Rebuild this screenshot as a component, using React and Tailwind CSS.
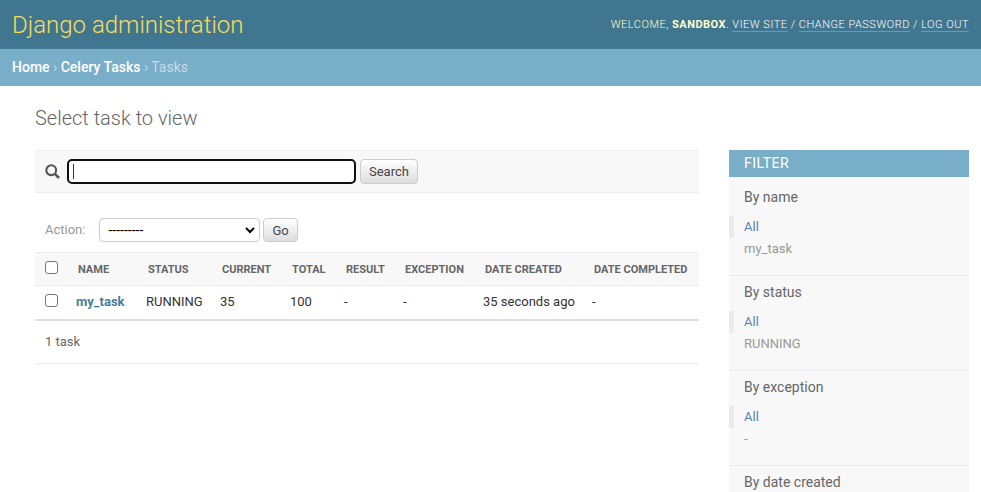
const columns = [
  { label: 'Name', width: 'w-[70px]' },
  { label: 'Status', width: 'w-[74px]' },
  { label: 'Current', width: 'w-[70px]' },
  { label: 'Total', width: 'w-[54px]' },
  { label: 'Result', width: 'w-[59px]' },
  { label: 'Exception', width: 'w-[80px]' },
  { label: 'Date created', width: 'w-[109px]' },
  { label: 'Date completed', width: 'w-auto' },
];

const rows = [['my_task', 'RUNNING', '35', '100', '-', '-', '35 seconds ago', '-']];

const filters = [
  { title: 'By name', options: ['All', 'my_task'] },
  { title: 'By status', options: ['All', 'RUNNING'] },
  { title: 'By exception', options: ['All', '-'] },
  { title: 'By date created', options: [] },
];

const buttonStyle =
  'rounded border border-[#ccc] bg-linear-to-b from-white to-[#ddd] px-2 text-[13px] leading-none text-[#444]';

function ToolLink({ children }) {
  return (
    <a href="#" className="border-b border-white/25 text-white">
      {children}
    </a>
  );
}

function Header() {
  return (
    <header className="flex h-[49px] items-center justify-between bg-[#417690] px-3 text-[#ffc]">
      <div className="text-2xl font-light text-[#f5dd5d]">
        <a href="#">Django administration</a>
      </div>
      <div className="pt-px text-[11px] font-light tracking-[0.5px] uppercase">
        Welcome, <strong className="font-bold">sandbox</strong>. <ToolLink>View site</ToolLink> /{' '}
        <ToolLink>Change password</ToolLink> / <ToolLink>Log out</ToolLink>
      </div>
    </header>
  );
}

function Breadcrumbs() {
  return (
    <nav aria-label="Breadcrumbs" className="h-[37px] bg-[#79aec8] px-3 text-sm leading-9 text-[#c4dce8]">
      <a href="#" className="font-medium text-white">Home</a>
      {' › '}
      <a href="#" className="font-medium text-white">Celery Tasks</a>
      {' › Tasks'}
    </nav>
  );
}

function SearchBar() {
  return (
    <form className="flex h-[43px] items-center border-y border-[#eee] bg-[#f8f8f8] px-[10px]" onSubmit={(e) => e.preventDefault()}>
      <label htmlFor="searchbar" aria-label="Search tasks" className="mr-[7px]">
        <svg width="15" height="15" viewBox="0 0 15 15" fill="none" stroke="#555">
          <circle cx="6.2" cy="6.2" r="4.9" strokeWidth="2.1" />
          <path d="M9.8 9.8L14 14" strokeWidth="2.6" />
        </svg>
      </label>
      <div className="relative mr-1 w-[289px]">
        <input
          id="searchbar"
          type="text"
          className="block h-[25px] w-full rounded-[5px] border-2 border-[#101010] bg-white px-1 text-[13px] text-[#333] caret-transparent outline-none"
        />
        <span className="pointer-events-none absolute top-[5px] left-[6px] h-[15px] w-px bg-[#333]" />
      </div>
      <button type="submit" className={`h-[25px] ${buttonStyle}`}>Search</button>
    </form>
  );
}

function Actions() {
  return (
    <div className="flex items-center px-[10px] pt-[25px] pb-[10px]">
      <label htmlFor="action" className="mr-[14px] text-[13px] text-[#999]">Action:</label>
      <div className="relative mr-[3px] w-[161px]">
        <select
          id="action"
          className="block h-6 w-full appearance-none rounded border border-[#ccc] bg-white pr-6 pl-2 text-sm leading-none text-black"
        >
          <option>---------</option>
        </select>
        <svg
          className="pointer-events-none absolute top-[9px] right-[5px]"
          width="10"
          height="7"
          viewBox="0 0 10 7"
          fill="none"
          stroke="#000"
          strokeWidth="2"
        >
          <path d="M1 1L5 5L9 1" />
        </svg>
      </div>
      <button type="button" className={`h-6 ${buttonStyle}`}>Go</button>
    </div>
  );
}

function Tick({ label }) {
  return (
    <input
      type="checkbox"
      aria-label={label}
      className="block size-[13px] appearance-none rounded-[3px] border border-[#767676] bg-white checked:bg-[#417690]"
    />
  );
}

function Results() {
  return (
    <table className="w-full table-fixed border-collapse text-left text-[13px]">
      <thead>
        <tr className="h-[33px] border-y border-[#eaeaea] bg-[#f8f8f8] text-[11px] text-[#666] uppercase">
          <th className="w-[33px] pb-1 pl-[10px]">
            <Tick label="Select all tasks" />
          </th>
          {columns.map((c) => (
            <th key={c.label} className={`${c.width} pt-0.5 pl-[10px] font-bold whitespace-nowrap`}>
              {c.label}
            </th>
          ))}
        </tr>
      </thead>
      <tbody>
        {rows.map((row) => (
          <tr key={row[0]} className="h-[34px] border-b-2 border-[#e0e0e0]">
            <td className="pb-1 pl-[10px]">
              <Tick label={`Select ${row[0]}`} />
            </td>
            <th scope="row" className="pb-0.5 pl-2 font-bold text-[#447e9b]">
              <a href="#">{row[0]}</a>
            </th>
            {row.slice(1).map((cell, i) => (
              <td key={i} className="pb-0.5 pl-2 whitespace-nowrap">{cell}</td>
            ))}
          </tr>
        ))}
      </tbody>
    </table>
  );
}

function FilterPanel() {
  return (
    <aside className="w-60 shrink-0 bg-[#f8f8f8]">
      <h2 className="mb-1 bg-[#79aec8] px-[15px] text-sm leading-[27px] font-normal tracking-[0.5px] text-white uppercase">
        Filter
      </h2>
      {filters.map((f) => (
        <section key={f.title} className="border-b border-[#eaeaea] pb-[15px]">
          <h3 className="mb-[3px] px-[15px] text-sm leading-8 text-[#666]">{f.title}</h3>
          <ul className="text-[13px] leading-[22px]">
            {f.options.map((option, i) => (
              <li
                key={option}
                className={
                  i === 0
                    ? 'border-l-[5px] border-[#eaeaea] pl-[10px] text-[#5b80b2]'
                    : 'pl-[15px] text-[#999]'
                }
              >
                <a href="#">{option}</a>
              </li>
            ))}
          </ul>
        </section>
      ))}
    </aside>
  );
}

export default function App() {
  return (
    <div className="h-screen overflow-hidden bg-white font-['Roboto',sans-serif] text-[#333]">
      <Header />
      <Breadcrumbs />
      <main className="pt-4 pr-3 pl-[35px]">
        <h1 className="mb-4 text-xl leading-8 font-light text-[#666]">Select task to view</h1>
        <div className="flex items-start gap-[30px]">
          <div className="min-w-0 flex-1">
            <SearchBar />
            <Actions />
            <Results />
            <p className="border-b border-[#eee] px-[10px] text-[13px] leading-[42px] text-[#666]">1 task</p>
          </div>
          <FilterPanel />
        </div>
      </main>
    </div>
  );
}
